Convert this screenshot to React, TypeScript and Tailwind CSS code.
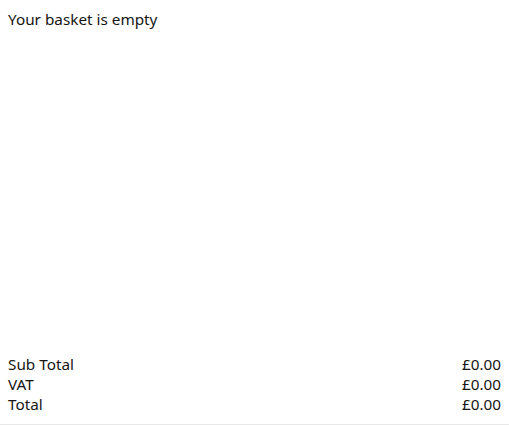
export default function App() {
  return (
    <div className="flex h-[425px] w-full flex-col bg-white text-[15.3px] leading-5 text-[#161513]" style={{ fontFamily: '"Noto Sans", "Open Sans", sans-serif' }}>
      <div className="px-2 pt-[9px]">Your basket is empty</div>
      <div className="flex-1" />
      <div className="border-b border-[#e8e8e8] px-2 pb-[10px]">
        <div className="flex justify-between"><span>Sub Total</span><span>£0.00</span></div>
        <div className="flex justify-between"><span>VAT</span><span>£0.00</span></div>
        <div className="flex justify-between"><span>Total</span><span>£0.00</span></div>
      </div>
    </div>
  );
}
